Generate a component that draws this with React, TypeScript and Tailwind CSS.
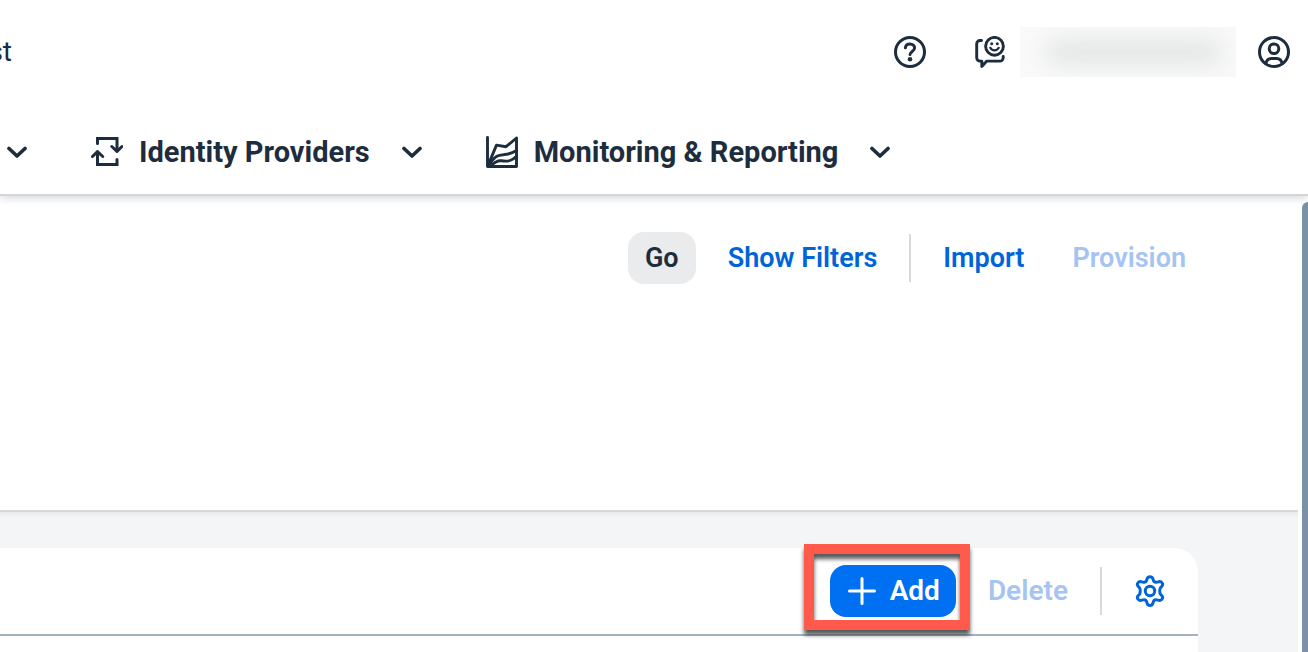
import type { ReactNode, SVGProps } from "react";

function Icon({ children, ...rest }: SVGProps<SVGSVGElement>) {
  return (
    <svg
      width="32"
      height="32"
      viewBox="0 0 32 32"
      fill="none"
      stroke="currentColor"
      strokeWidth="3"
      strokeLinecap="round"
      strokeLinejoin="round"
      aria-hidden="true"
      className="shrink-0"
      {...rest}
    >
      {children}
    </svg>
  );
}

function HelpIcon() {
  return (
    <Icon>
      <circle cx="16" cy="16" r="14.5" />
      <path d="M11.4 11.8C11.6 9.4 13.4 8 16 8c2.700 0 4.600 1.700 4.600 4.100 0 3.300-4.600 3.300-4.600 6.400" />
      <circle cx="16" cy="23.300" r="2.300" fill="currentColor" stroke="none" />
    </Icon>
  );
}

function FeedbackIcon() {
  return (
    <Icon strokeWidth="2.900">
      <circle cx="20.500" cy="10.300" r="8.900" />
      <path d="M7.500 4.500H6A3.300 3.300 0 0 0 2.700 7.800V21.800A3.300 3.300 0 0 0 6 25.100h1.800v5.400l5-5.400h13A3.300 3.300 0 0 0 29.200 21.800v-1.300" />
      <path d="M16.300 11.800c.8 1.700 2.300 2.500 4.200 2.500s3.400-.8 4.200-2.500" strokeWidth="2.200" />
      <circle cx="17.700" cy="7.700" r="1.500" fill="currentColor" stroke="none" />
      <circle cx="23.300" cy="7.700" r="1.500" fill="currentColor" stroke="none" />
    </Icon>
  );
}

function AccountIcon() {
  return (
    <Icon>
      <circle cx="16" cy="16" r="14.500" />
      <circle cx="16" cy="12.800" r="4.800" />
      <path d="M7.800 27.500c.8-3.300 2.600-5 5.400-5h5.600c2.800 0 4.600 1.700 5.400 5" />
    </Icon>
  );
}

function SyncIcon() {
  return (
    <Icon strokeLinejoin="miter">
      <path d="M6.500 7.500V2.500h19.500v12.500" />
      <path d="M20.800 10.500l5.200 4.800 5-4.800" strokeLinejoin="round" />
      <path d="M26 23.500v5H6.500V16" />
      <path d="M1.500 20.500l5-4.800 5.200 4.800" strokeLinejoin="round" />
    </Icon>
  );
}

function AreaChartIcon() {
  return (
    <Icon strokeWidth="2.900">
      <path d="M1.500 1.500v29h29V2L20 10.700l-9.500-1.600L3 27" />
      <path d="M3 28l5.500-6c1.500-1.500 3-2.300 5-2.600l8.500-1.400c3-.6 5.500-1.700 8.500-3.500" />
      <path d="M4 29.500l6-3.500c2-1.200 3.500-1.500 5.500-1.200 3 .5 6 .6 8.500-.3 2.500-.9 4.500-2.300 6.500-4.300" />
      <path d="M1.500 22v8.500H9z" fill="currentColor" stroke="none" />
    </Icon>
  );
}

function GearIcon() {
  return (
    <Icon>
      <path d="M13.200 3.500c.8-2.500 4.800-2.500 5.600 0l.5 1.600c.5 1.600 2.200 2.400 3.800 2l1.800-.4c2.900-.6 4.800 2.500 3 4.500l-1.200 1.300c-1.300 1.500-1.300 5.500 0 7l1.200 1.300c1.800 2-.1 5.100-3 4.500l-1.800-.4c-1.600-.4-3.300.4-3.800 2l-.5 1.600c-.8 2.500-4.800 2.500-5.600 0l-.5-1.600c-.5-1.600-2.200-2.400-3.800-2l-1.800.4c-2.900.6-4.800-2.500-3-4.500l1.200-1.300c1.300-1.500 1.300-5.500 0-7l-1.200-1.300c-1.800-2 .1-5.100 3-4.500l1.800.4c1.600.4 3.300-.4 3.800-2z" />
      <circle cx="16" cy="16" r="4.700" />
    </Icon>
  );
}

function Chevron() {
  return (
    <Icon width="20" height="12" viewBox="0 0 20 12" strokeWidth="3.700">
      <path d="M2 2.500l8 7.500 8-7.500" />
    </Icon>
  );
}

function NavItem({ icon, label }: { icon: ReactNode; label: string }) {
  return (
    <button type="button" className="flex items-center text-[29px] leading-9 font-bold">
      {icon}
      <span className="mr-8 ml-4 whitespace-nowrap">{label}</span>
      <Chevron />
    </button>
  );
}

const action = "h-13 min-w-17 rounded-2xl px-4 leading-9 font-semibold whitespace-nowrap";

function Divider() {
  return <div className="h-12 w-0.5 shrink-0 bg-[#d9d9d9]" />;
}

export default function App() {
  return (
    <div className="flex h-screen flex-col overflow-hidden bg-white font-[Roboto,'Liberation_Sans',sans-serif] text-[#1d2d3e]">
      <header className="relative z-10 shrink-0 border-b-2 border-[#d5d5d9] bg-white shadow-[0_2px_8px_rgba(34,53,72,0.2)]">
        <div className="flex h-26 items-center pr-4.5">
          <div className="flex w-3 justify-end overflow-hidden text-[28px] leading-9">
            <span>st</span>
          </div>
          <button type="button" aria-label="Help" className="mr-12 ml-auto">
            <HelpIcon />
          </button>
          <button type="button" aria-label="Feedback" className="mr-3.5">
            <FeedbackIcon />
          </button>
          <div className="h-12.5 w-54 overflow-hidden bg-[#fafafa] py-3 pr-3 pl-6">
            <div className="h-full rounded-full bg-[#e2e4e4] blur-md" />
          </div>
          <button type="button" aria-label="Account" className="ml-5.5">
            <AccountIcon />
          </button>
        </div>
        <nav className="flex h-22.5 items-center gap-16 pt-1.5 pl-[7px]">
          <button type="button" aria-label="Expand menu">
            <Chevron />
          </button>
          <NavItem icon={<SyncIcon />} label="Identity Providers" />
          <NavItem icon={<AreaChartIcon />} label="Monitoring & Reporting" />
        </nav>
      </header>

      <div className="flex min-h-0 flex-1">
        <main className="flex min-w-0 flex-1 flex-col">
          <section className="flex h-79 shrink-0 items-start justify-end border-b-2 border-[#d9d9d9] pt-9 pr-24">
            <div className="flex items-center gap-4 text-[27px]">
              <button type="button" className={`${action} bg-[#eaebed]`}>Go</button>
              <button type="button" className={`${action} text-[#0064d9]`}>Show Filters</button>
              <Divider />
              <button type="button" className={`${action} text-[#0064d9]`}>Import</button>
              <button type="button" disabled className={`${action} text-[#a6c4f2]`}>Provision</button>
            </div>
          </section>
          <section className="flex flex-1 flex-col bg-[#f4f5f7] pt-9 pr-25 shadow-[inset_0_6px_4px_-4px_rgba(34,53,72,0.08)]">
            <div className="flex flex-1 flex-col rounded-tr-3xl bg-white">
              <div className="flex h-22 shrink-0 items-center justify-end gap-4 border-b-2 border-[#a4b2c0] pr-4 text-[28px]">
                <div className="relative">
                  <button type="button" className={`${action} flex items-center gap-3 bg-[#0070f2] text-white`}>
                    <Icon strokeWidth="3">
                      <path d="M16 3.500v25M3.500 16h25" />
                    </Icon>
                    Add
                  </button>
                  <div className="pointer-events-none absolute -top-[21px] -right-3.5 h-[86px] w-[166px] border-10 border-[#ff5a4c] drop-shadow-[0_5px_2px_rgba(0,0,0,0.65)]" />
                </div>
                <button type="button" disabled className={`${action} text-[#a6c4f2]`}>Delete</button>
                <Divider />
                <button type="button" aria-label="Settings" className="flex h-13 items-center px-4 text-[#0064d9]">
                  <GearIcon />
                </button>
              </div>
            </div>
          </section>
        </main>
        <div className="w-2.5 shrink-0 pt-1.5 pl-1">
          <div className="h-full rounded-tl-md bg-[#7b91a8]" />
        </div>
      </div>
    </div>
  );
}
